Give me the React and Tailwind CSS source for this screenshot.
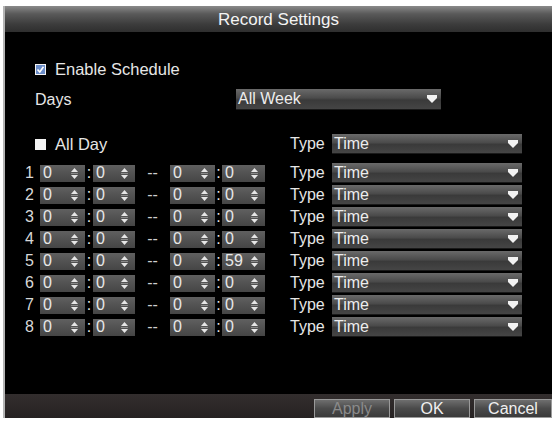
import React from "react";

const font = { fontFamily: '"Liberation Sans", Arial, sans-serif' };

function DownArrow() {
  return (
    <svg width="10" height="8" viewBox="0 0 10 8" className="shrink-0">
      <polygon points="0,0 10,0 10,3 5,8 0,3" fill="#f2f2f2" />
    </svg>
  );
}

function UpDown() {
  return (
    <svg width="9" height="13" viewBox="0 0 9 13" className="shrink-0">
      <polygon points="4.5,1 8,5 1,5" fill="#e6e6e6" />
      <rect x="1" y="6" width="7" height="1" fill="#8a8a8a" />
      <polygon points="1,8 8,8 4.5,12" fill="#e6e6e6" />
    </svg>
  );
}

function Select({ value, w, h = "h-[20px]" }) {
  return (
    <div
      className={`${w} ${h} flex items-center justify-between pl-[2px] pr-[4px] bg-[linear-gradient(#6a6a6a,#4b4b4b_45%,#3a3a3a_55%,#454545)] border-b border-[#1a1a1a] text-[#ededed] text-[16px] leading-none`}
    >
      <span>{value}</span>
      <DownArrow />
    </div>
  );
}

function Spin({ value, w }) {
  return (
    <div
      className={`${w} h-[17px] flex items-center justify-between pl-[3px] pr-[6px] bg-[linear-gradient(#606060,#525252_50%,#454545)] text-[#e8e8e8] text-[16px] leading-none`}
    >
      <span>{value}</span>
      <UpDown />
    </div>
  );
}

function Check({ checked }) {
  return (
    <div className="w-[11px] h-[11px] bg-[#f4f4f4] flex items-center justify-center shrink-0">
      {checked && (
        <svg width="9" height="9" viewBox="0 0 9 9">
          <rect width="9" height="9" fill="#6a8cc8" />
          <path d="M1.5 4.5 L3.8 7 L7.5 1.8" stroke="#ffffff" strokeWidth="1.6" fill="none" />
        </svg>
      )}
    </div>
  );
}

function Btn({ label, w, disabled }) {
  return (
    <div
      className={`${w} h-[19px] flex items-center justify-center border border-[#9a9a9a] bg-[linear-gradient(#6e6e6e,#4a4a4a_50%,#3a3a3a)] text-[16px] leading-none ${
        disabled ? "text-[#8a8a8a]" : "text-[#f0f0f0]"
      }`}
    >
      {label}
    </div>
  );
}

export default function App() {
  const rows = [1, 2, 3, 4, 5, 6, 7, 8];
  return (
    <div className="w-[553px] h-[424px] bg-white overflow-hidden" style={font}>
      <div className="ml-[3px] mt-[6px] w-[549px] h-[412px] flex flex-col border-l-2 border-[#b4b4b4] bg-black">
        <div className="h-[26px] shrink-0 flex items-center justify-center bg-[linear-gradient(#8a8a8a,#5a5a5a_30%,#3c3c3c_70%,#2e2e2e)] text-[#f4f4f4] text-[17px] leading-none">
          Record Settings
        </div>
        <div className="flex-1 flex flex-col pt-[27px] text-[#e6e6e6] text-[16px] leading-none">
          <div className="h-[20px] flex items-center pl-[30px] gap-[9px]">
            <Check checked />
            <span className="text-[16.5px]">Enable Schedule</span>
          </div>
          <div className="mt-[10px] h-[21px] flex items-center pl-[30px]">
            <span className="w-[201px]">Days</span>
            <Select value="All Week" w="w-[205px]" h="h-[21px]" />
          </div>
          <div className="mt-[24px] h-[20px] flex items-center pl-[30px]">
            <div className="w-[255px] flex items-center gap-[9px]">
              <Check />
              <span className="text-[16.5px]">All Day</span>
            </div>
            <span className="w-[42px]">Type</span>
            <Select value="Time" w="w-[190px]" />
          </div>
          <div className="mt-[8px] flex flex-col">
            {rows.map((n) => (
              <div key={n} className="h-[22px] flex items-center pl-[20px]">
                <span className="w-[15px] text-[#d8d8d8]">{n}</span>
                <Spin value="0" w="w-[45px]" />
                <span className="w-[8px] text-center">:</span>
                <Spin value="0" w="w-[42px]" />
                <span className="w-[35px] text-center text-[#cfcfcf]">--</span>
                <Spin value="0" w="w-[45px]" />
                <span className="w-[7px] text-center">:</span>
                <Spin value={n === 5 ? "59" : "0"} w="w-[43px]" />
                <span className="ml-[25px] w-[42px]">Type</span>
                <Select value="Time" w="w-[190px]" />
              </div>
            ))}
          </div>
        </div>
        <div className="h-[24px] shrink-0 flex items-end justify-end gap-[4px] bg-[linear-gradient(#332e2e,#262222)]">
          <Btn label="Apply" w="w-[76px]" disabled />
          <Btn label="OK" w="w-[76px]" />
          <Btn label="Cancel" w="w-[78px]" />
        </div>
      </div>
    </div>
  );
}
